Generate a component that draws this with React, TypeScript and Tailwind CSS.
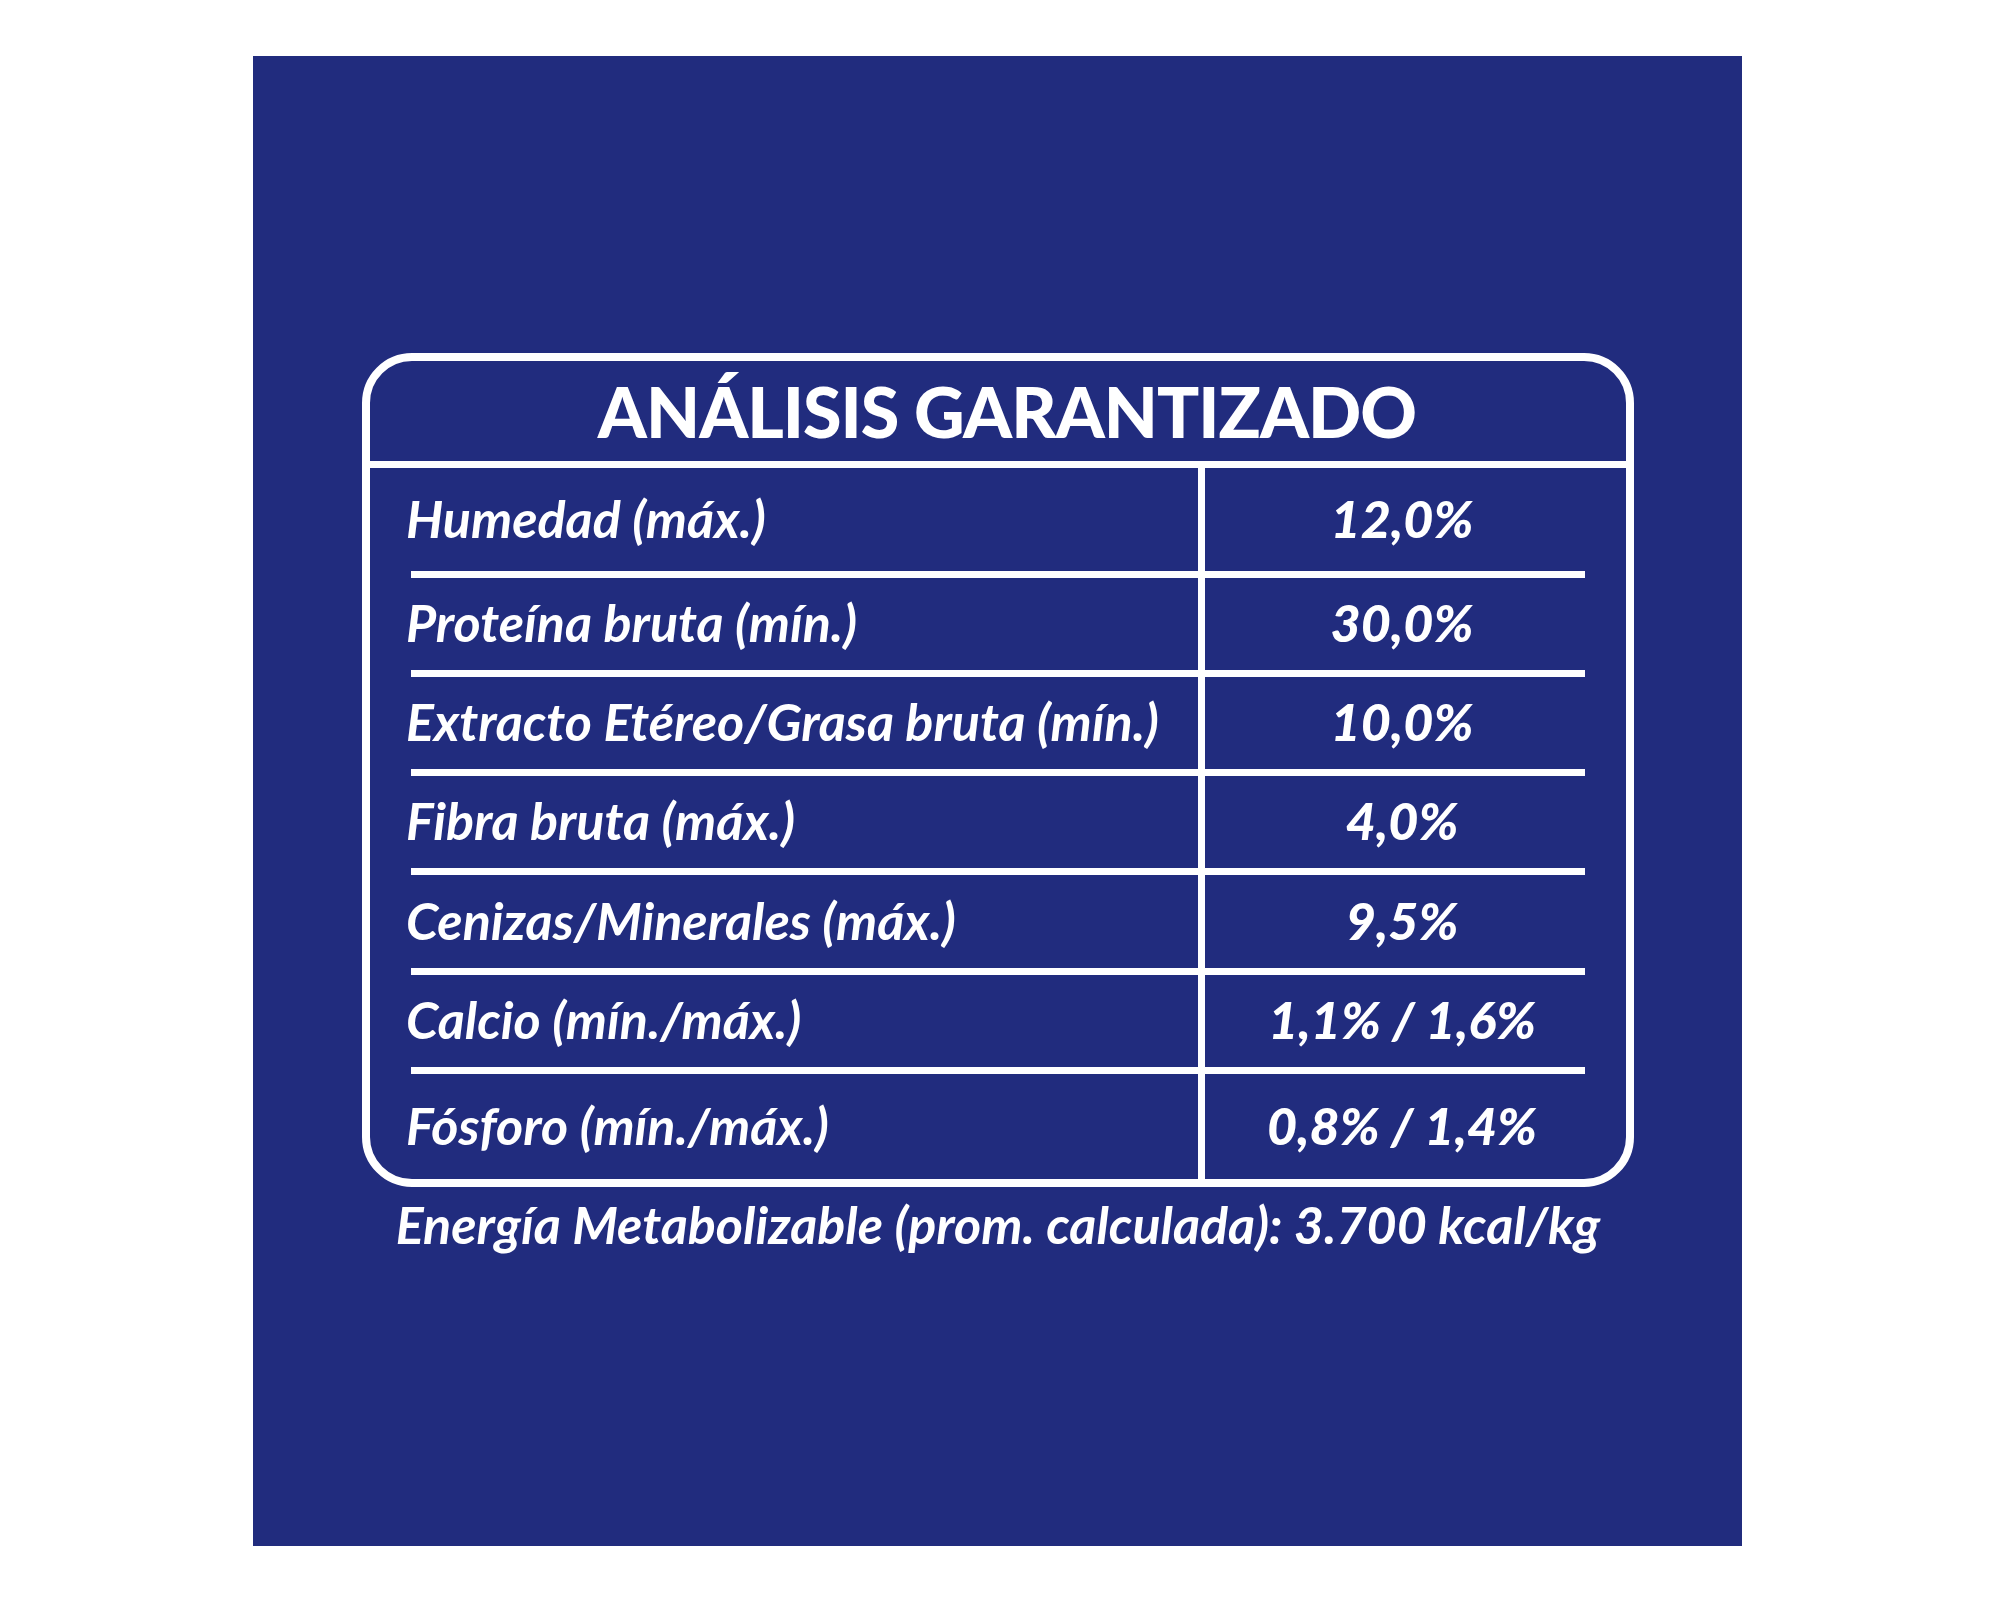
const rows = [
  { label: "Humedad (máx.)", value: "12,0%", h: "h-[103px]" },
  { label: "Proteína bruta (mín.)", value: "30,0%", h: "h-[92px]" },
  { label: "Extracto Etéreo/Grasa bruta (mín.)", value: "10,0%", h: "h-[92px]" },
  { label: "Fibra bruta (máx.)", value: "4,0%", h: "h-[92px]" },
  { label: "Cenizas/Minerales (máx.)", value: "9,5%", h: "h-[93px]" },
  { label: "Calcio (mín./máx.)", value: "1,1% / 1,6%", h: "h-[92px]" },
  { label: "Fósforo (mín./máx.)", value: "0,8% / 1,4%", h: "h-[105px]" },
];

const font = { fontFamily: "Lato, 'Open Sans', sans-serif" };

export default function App() {
  return (
    <div className="w-[2000px] h-[1600px] bg-white pl-[253px] pt-[56px]" style={font}>
      <div className="w-[1489px] h-[1490px] bg-[#212c7e] pl-[109px] pt-[297px] text-white">
        <div className="w-[1272px] border-[8px] border-white rounded-[50px] overflow-hidden">
          <div className="h-[100px] flex items-center justify-center pl-[18px]">
            <h1 className="text-[70px] font-black leading-none tracking-[-1px]">ANÁLISIS GARANTIZADO</h1>
          </div>
          <div className="h-[7px] bg-white" />
          {rows.map((r, i) => (
            <div key={r.label}>
              {i > 0 && <div className="h-[7px] bg-white mx-[41px]" />}
              <div className={`flex ${r.h}`}>
                <div className="w-[835px] border-r-[7px] border-white flex items-center pl-[36px] pb-[4px]">
                  <span className="text-[52px] italic font-bold leading-none">{r.label}</span>
                </div>
                <div className="flex-1 flex items-center justify-center pr-[27px] pb-[4px]">
                  <span className="text-[52px] italic font-black leading-none">{r.value}</span>
                </div>
              </div>
            </div>
          ))}
        </div>
        <p className="w-[1272px] mt-[11px] text-center text-[52px] italic font-bold leading-none">
          Energía Metabolizable (prom. calculada): 3.700 kcal/kg
        </p>
      </div>
    </div>
  );
}
